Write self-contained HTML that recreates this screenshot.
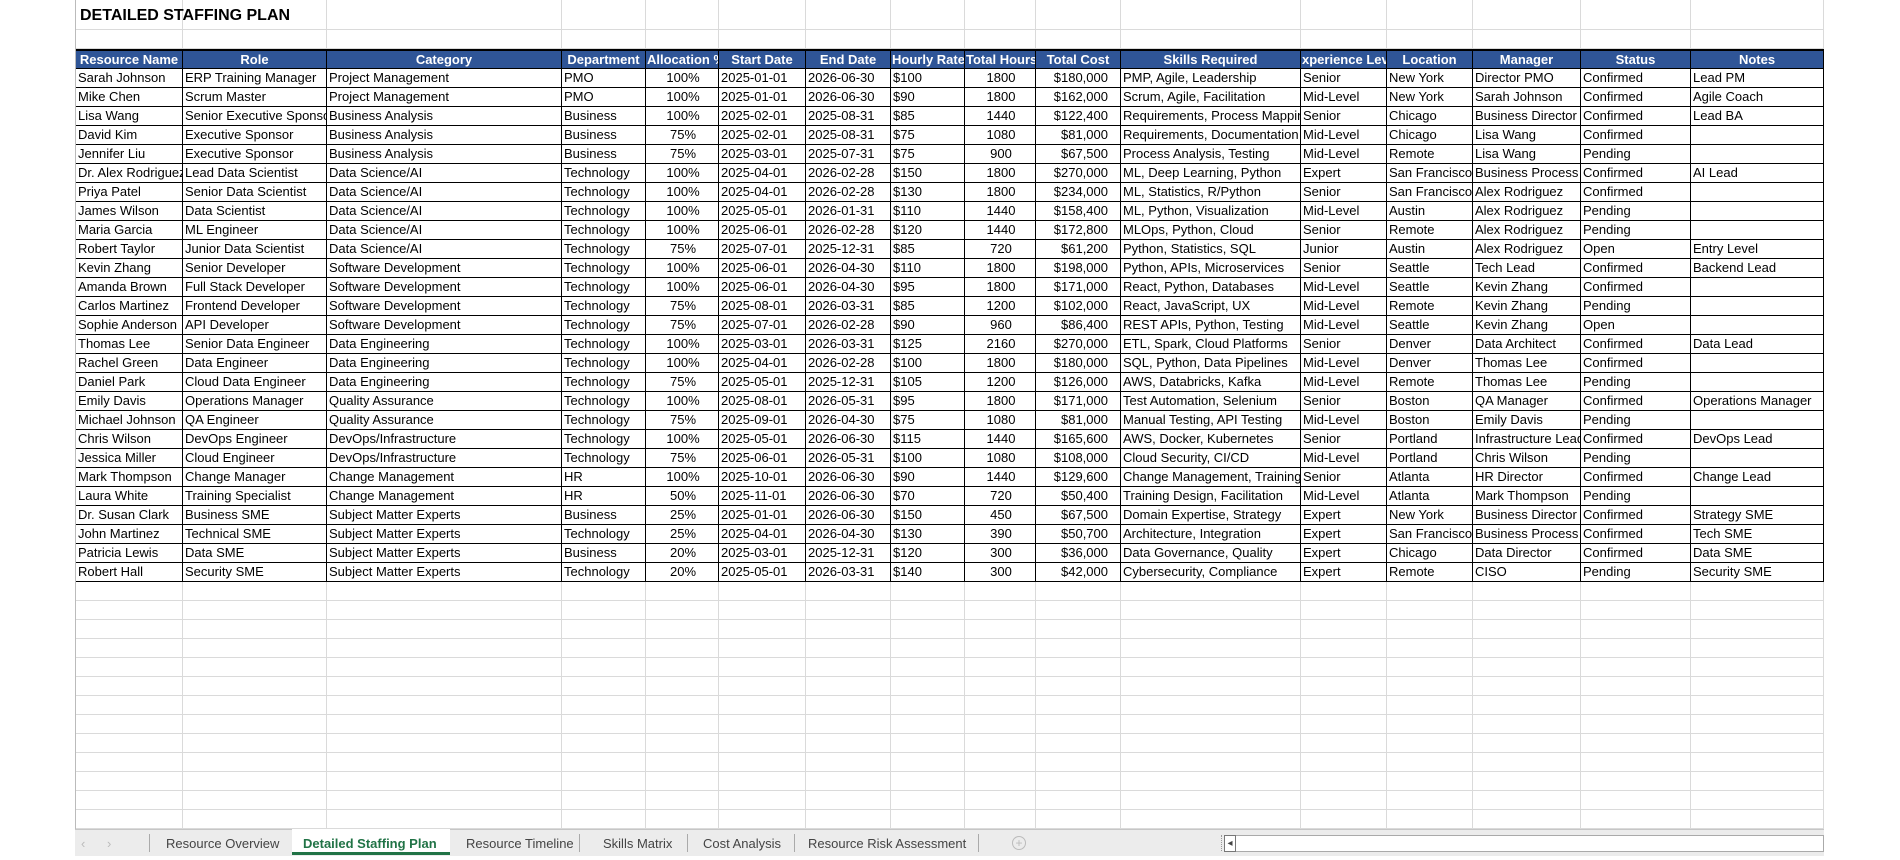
<!DOCTYPE html>
<html><head><meta charset="utf-8"><style>
*{box-sizing:border-box;margin:0;padding:0}
body{width:1900px;height:860px;background:#fff;font-family:"Liberation Sans",sans-serif;font-size:13px;color:#000;position:relative;overflow:hidden}
#sheet{position:absolute;left:75px;top:0;width:1749px}
.r{display:flex;height:19px}
.r>*{display:block;height:19px;line-height:18px;border-right:1px solid #dadada;border-bottom:1px solid #dadada;white-space:nowrap;overflow:hidden;padding-left:2px;font-style:normal;flex:none}
.r>*:nth-child(1){width:108px}.r>*:nth-child(2){width:144px}.r>*:nth-child(3){width:235px}.r>*:nth-child(4){width:84px}
.r>*:nth-child(5){width:73px;text-align:center}.r>*:nth-child(6){width:87px}.r>*:nth-child(7){width:85px}.r>*:nth-child(8){width:74px}
.r>*:nth-child(9){width:71px;text-align:center}.r>*:nth-child(10){width:85px;text-align:right;padding-right:12px}.r>*:nth-child(11){width:180px}
.r>*:nth-child(12){width:86px}.r>*:nth-child(13){width:86px}.r>*:nth-child(14){width:108px}.r>*:nth-child(15){width:110px}.r>*:nth-child(16){width:133px}
.t{height:30px}.t>*{height:30px}
.d>*{border-color:#000}
.d>*:first-child{border-left:1px solid #000}
.h>*{background:#2f5597;color:#fff;font-weight:bold;text-align:center!important;border-color:#000;border-top:2px solid #000;padding:0 1px!important;height:20px;line-height:17px}
.h>*:first-child{border-left:1px solid #000}
.h{height:20px}
#title{position:absolute;left:80px;top:7px;font-weight:bold;font-size:16px}
#tabs{position:absolute;left:75px;top:829px;width:1749px;height:27px;background:#ececec;border-top:1px solid #c6c6c6;font-size:13px;color:#444}
#tabs span{position:absolute;top:6px}
.sep{position:absolute;top:4px;width:1px;height:18px;background:#aaa}
</style></head><body>
<div id="sheet">
<div class="r t"><i></i><i></i><i></i><i></i><i></i><i></i><i></i><i></i><i></i><i></i><i></i><i></i><i></i><i></i><i></i><i></i></div>
<div class="r"><i></i><i></i><i></i><i></i><i></i><i></i><i></i><i></i><i></i><i></i><i></i><i></i><i></i><i></i><i></i><i></i></div>
<div class="r h"><i>Resource Name</i><i>Role</i><i>Category</i><i>Department</i><i>Allocation %</i><i>Start Date</i><i>End Date</i><i>Hourly Rate</i><i>Total Hours</i><i>Total Cost</i><i>Skills Required</i><i>xperience Leve</i><i>Location</i><i>Manager</i><i>Status</i><i>Notes</i></div>
<div class="r d"><i>Sarah Johnson</i><i>ERP Training Manager</i><i>Project Management</i><i>PMO</i><i>100%</i><i>2025-01-01</i><i>2026-06-30</i><i>$100</i><i>1800</i><i>$180,000</i><i>PMP, Agile, Leadership</i><i>Senior</i><i>New York</i><i>Director PMO</i><i>Confirmed</i><i>Lead PM</i></div>
<div class="r d"><i>Mike Chen</i><i>Scrum Master</i><i>Project Management</i><i>PMO</i><i>100%</i><i>2025-01-01</i><i>2026-06-30</i><i>$90</i><i>1800</i><i>$162,000</i><i>Scrum, Agile, Facilitation</i><i>Mid-Level</i><i>New York</i><i>Sarah Johnson</i><i>Confirmed</i><i>Agile Coach</i></div>
<div class="r d"><i>Lisa Wang</i><i>Senior Executive Sponsor</i><i>Business Analysis</i><i>Business</i><i>100%</i><i>2025-02-01</i><i>2025-08-31</i><i>$85</i><i>1440</i><i>$122,400</i><i>Requirements, Process Mapping</i><i>Senior</i><i>Chicago</i><i>Business Director</i><i>Confirmed</i><i>Lead BA</i></div>
<div class="r d"><i>David Kim</i><i>Executive Sponsor</i><i>Business Analysis</i><i>Business</i><i>75%</i><i>2025-02-01</i><i>2025-08-31</i><i>$75</i><i>1080</i><i>$81,000</i><i>Requirements, Documentation</i><i>Mid-Level</i><i>Chicago</i><i>Lisa Wang</i><i>Confirmed</i><i></i></div>
<div class="r d"><i>Jennifer Liu</i><i>Executive Sponsor</i><i>Business Analysis</i><i>Business</i><i>75%</i><i>2025-03-01</i><i>2025-07-31</i><i>$75</i><i>900</i><i>$67,500</i><i>Process Analysis, Testing</i><i>Mid-Level</i><i>Remote</i><i>Lisa Wang</i><i>Pending</i><i></i></div>
<div class="r d"><i>Dr. Alex Rodriguez</i><i>Lead Data Scientist</i><i>Data Science/AI</i><i>Technology</i><i>100%</i><i>2025-04-01</i><i>2026-02-28</i><i>$150</i><i>1800</i><i>$270,000</i><i>ML, Deep Learning, Python</i><i>Expert</i><i>San Francisco</i><i>Business Process</i><i>Confirmed</i><i>AI Lead</i></div>
<div class="r d"><i>Priya Patel</i><i>Senior Data Scientist</i><i>Data Science/AI</i><i>Technology</i><i>100%</i><i>2025-04-01</i><i>2026-02-28</i><i>$130</i><i>1800</i><i>$234,000</i><i>ML, Statistics, R/Python</i><i>Senior</i><i>San Francisco</i><i>Alex Rodriguez</i><i>Confirmed</i><i></i></div>
<div class="r d"><i>James Wilson</i><i>Data Scientist</i><i>Data Science/AI</i><i>Technology</i><i>100%</i><i>2025-05-01</i><i>2026-01-31</i><i>$110</i><i>1440</i><i>$158,400</i><i>ML, Python, Visualization</i><i>Mid-Level</i><i>Austin</i><i>Alex Rodriguez</i><i>Pending</i><i></i></div>
<div class="r d"><i>Maria Garcia</i><i>ML Engineer</i><i>Data Science/AI</i><i>Technology</i><i>100%</i><i>2025-06-01</i><i>2026-02-28</i><i>$120</i><i>1440</i><i>$172,800</i><i>MLOps, Python, Cloud</i><i>Senior</i><i>Remote</i><i>Alex Rodriguez</i><i>Pending</i><i></i></div>
<div class="r d"><i>Robert Taylor</i><i>Junior Data Scientist</i><i>Data Science/AI</i><i>Technology</i><i>75%</i><i>2025-07-01</i><i>2025-12-31</i><i>$85</i><i>720</i><i>$61,200</i><i>Python, Statistics, SQL</i><i>Junior</i><i>Austin</i><i>Alex Rodriguez</i><i>Open</i><i>Entry Level</i></div>
<div class="r d"><i>Kevin Zhang</i><i>Senior Developer</i><i>Software Development</i><i>Technology</i><i>100%</i><i>2025-06-01</i><i>2026-04-30</i><i>$110</i><i>1800</i><i>$198,000</i><i>Python, APIs, Microservices</i><i>Senior</i><i>Seattle</i><i>Tech Lead</i><i>Confirmed</i><i>Backend Lead</i></div>
<div class="r d"><i>Amanda Brown</i><i>Full Stack Developer</i><i>Software Development</i><i>Technology</i><i>100%</i><i>2025-06-01</i><i>2026-04-30</i><i>$95</i><i>1800</i><i>$171,000</i><i>React, Python, Databases</i><i>Mid-Level</i><i>Seattle</i><i>Kevin Zhang</i><i>Confirmed</i><i></i></div>
<div class="r d"><i>Carlos Martinez</i><i>Frontend Developer</i><i>Software Development</i><i>Technology</i><i>75%</i><i>2025-08-01</i><i>2026-03-31</i><i>$85</i><i>1200</i><i>$102,000</i><i>React, JavaScript, UX</i><i>Mid-Level</i><i>Remote</i><i>Kevin Zhang</i><i>Pending</i><i></i></div>
<div class="r d"><i>Sophie Anderson</i><i>API Developer</i><i>Software Development</i><i>Technology</i><i>75%</i><i>2025-07-01</i><i>2026-02-28</i><i>$90</i><i>960</i><i>$86,400</i><i>REST APIs, Python, Testing</i><i>Mid-Level</i><i>Seattle</i><i>Kevin Zhang</i><i>Open</i><i></i></div>
<div class="r d"><i>Thomas Lee</i><i>Senior Data Engineer</i><i>Data Engineering</i><i>Technology</i><i>100%</i><i>2025-03-01</i><i>2026-03-31</i><i>$125</i><i>2160</i><i>$270,000</i><i>ETL, Spark, Cloud Platforms</i><i>Senior</i><i>Denver</i><i>Data Architect</i><i>Confirmed</i><i>Data Lead</i></div>
<div class="r d"><i>Rachel Green</i><i>Data Engineer</i><i>Data Engineering</i><i>Technology</i><i>100%</i><i>2025-04-01</i><i>2026-02-28</i><i>$100</i><i>1800</i><i>$180,000</i><i>SQL, Python, Data Pipelines</i><i>Mid-Level</i><i>Denver</i><i>Thomas Lee</i><i>Confirmed</i><i></i></div>
<div class="r d"><i>Daniel Park</i><i>Cloud Data Engineer</i><i>Data Engineering</i><i>Technology</i><i>75%</i><i>2025-05-01</i><i>2025-12-31</i><i>$105</i><i>1200</i><i>$126,000</i><i>AWS, Databricks, Kafka</i><i>Mid-Level</i><i>Remote</i><i>Thomas Lee</i><i>Pending</i><i></i></div>
<div class="r d"><i>Emily Davis</i><i>Operations Manager</i><i>Quality Assurance</i><i>Technology</i><i>100%</i><i>2025-08-01</i><i>2026-05-31</i><i>$95</i><i>1800</i><i>$171,000</i><i>Test Automation, Selenium</i><i>Senior</i><i>Boston</i><i>QA Manager</i><i>Confirmed</i><i>Operations Manager</i></div>
<div class="r d"><i>Michael Johnson</i><i>QA Engineer</i><i>Quality Assurance</i><i>Technology</i><i>75%</i><i>2025-09-01</i><i>2026-04-30</i><i>$75</i><i>1080</i><i>$81,000</i><i>Manual Testing, API Testing</i><i>Mid-Level</i><i>Boston</i><i>Emily Davis</i><i>Pending</i><i></i></div>
<div class="r d"><i>Chris Wilson</i><i>DevOps Engineer</i><i>DevOps/Infrastructure</i><i>Technology</i><i>100%</i><i>2025-05-01</i><i>2026-06-30</i><i>$115</i><i>1440</i><i>$165,600</i><i>AWS, Docker, Kubernetes</i><i>Senior</i><i>Portland</i><i>Infrastructure Lead</i><i>Confirmed</i><i>DevOps Lead</i></div>
<div class="r d"><i>Jessica Miller</i><i>Cloud Engineer</i><i>DevOps/Infrastructure</i><i>Technology</i><i>75%</i><i>2025-06-01</i><i>2026-05-31</i><i>$100</i><i>1080</i><i>$108,000</i><i>Cloud Security, CI/CD</i><i>Mid-Level</i><i>Portland</i><i>Chris Wilson</i><i>Pending</i><i></i></div>
<div class="r d"><i>Mark Thompson</i><i>Change Manager</i><i>Change Management</i><i>HR</i><i>100%</i><i>2025-10-01</i><i>2026-06-30</i><i>$90</i><i>1440</i><i>$129,600</i><i>Change Management, Training</i><i>Senior</i><i>Atlanta</i><i>HR Director</i><i>Confirmed</i><i>Change Lead</i></div>
<div class="r d"><i>Laura White</i><i>Training Specialist</i><i>Change Management</i><i>HR</i><i>50%</i><i>2025-11-01</i><i>2026-06-30</i><i>$70</i><i>720</i><i>$50,400</i><i>Training Design, Facilitation</i><i>Mid-Level</i><i>Atlanta</i><i>Mark Thompson</i><i>Pending</i><i></i></div>
<div class="r d"><i>Dr. Susan Clark</i><i>Business SME</i><i>Subject Matter Experts</i><i>Business</i><i>25%</i><i>2025-01-01</i><i>2026-06-30</i><i>$150</i><i>450</i><i>$67,500</i><i>Domain Expertise, Strategy</i><i>Expert</i><i>New York</i><i>Business Director</i><i>Confirmed</i><i>Strategy SME</i></div>
<div class="r d"><i>John Martinez</i><i>Technical SME</i><i>Subject Matter Experts</i><i>Technology</i><i>25%</i><i>2025-04-01</i><i>2026-04-30</i><i>$130</i><i>390</i><i>$50,700</i><i>Architecture, Integration</i><i>Expert</i><i>San Francisco</i><i>Business Process</i><i>Confirmed</i><i>Tech SME</i></div>
<div class="r d"><i>Patricia Lewis</i><i>Data SME</i><i>Subject Matter Experts</i><i>Business</i><i>20%</i><i>2025-03-01</i><i>2025-12-31</i><i>$120</i><i>300</i><i>$36,000</i><i>Data Governance, Quality</i><i>Expert</i><i>Chicago</i><i>Data Director</i><i>Confirmed</i><i>Data SME</i></div>
<div class="r d"><i>Robert Hall</i><i>Security SME</i><i>Subject Matter Experts</i><i>Technology</i><i>20%</i><i>2025-05-01</i><i>2026-03-31</i><i>$140</i><i>300</i><i>$42,000</i><i>Cybersecurity, Compliance</i><i>Expert</i><i>Remote</i><i>CISO</i><i>Pending</i><i>Security SME</i></div>
<div class="r"><i></i><i></i><i></i><i></i><i></i><i></i><i></i><i></i><i></i><i></i><i></i><i></i><i></i><i></i><i></i><i></i></div>
<div class="r"><i></i><i></i><i></i><i></i><i></i><i></i><i></i><i></i><i></i><i></i><i></i><i></i><i></i><i></i><i></i><i></i></div>
<div class="r"><i></i><i></i><i></i><i></i><i></i><i></i><i></i><i></i><i></i><i></i><i></i><i></i><i></i><i></i><i></i><i></i></div>
<div class="r"><i></i><i></i><i></i><i></i><i></i><i></i><i></i><i></i><i></i><i></i><i></i><i></i><i></i><i></i><i></i><i></i></div>
<div class="r"><i></i><i></i><i></i><i></i><i></i><i></i><i></i><i></i><i></i><i></i><i></i><i></i><i></i><i></i><i></i><i></i></div>
<div class="r"><i></i><i></i><i></i><i></i><i></i><i></i><i></i><i></i><i></i><i></i><i></i><i></i><i></i><i></i><i></i><i></i></div>
<div class="r"><i></i><i></i><i></i><i></i><i></i><i></i><i></i><i></i><i></i><i></i><i></i><i></i><i></i><i></i><i></i><i></i></div>
<div class="r"><i></i><i></i><i></i><i></i><i></i><i></i><i></i><i></i><i></i><i></i><i></i><i></i><i></i><i></i><i></i><i></i></div>
<div class="r"><i></i><i></i><i></i><i></i><i></i><i></i><i></i><i></i><i></i><i></i><i></i><i></i><i></i><i></i><i></i><i></i></div>
<div class="r"><i></i><i></i><i></i><i></i><i></i><i></i><i></i><i></i><i></i><i></i><i></i><i></i><i></i><i></i><i></i><i></i></div>
<div class="r"><i></i><i></i><i></i><i></i><i></i><i></i><i></i><i></i><i></i><i></i><i></i><i></i><i></i><i></i><i></i><i></i></div>
<div class="r"><i></i><i></i><i></i><i></i><i></i><i></i><i></i><i></i><i></i><i></i><i></i><i></i><i></i><i></i><i></i><i></i></div>
<div class="r"><i></i><i></i><i></i><i></i><i></i><i></i><i></i><i></i><i></i><i></i><i></i><i></i><i></i><i></i><i></i><i></i></div>
</div>
<div style="position:absolute;left:75px;top:0;width:1px;height:829px;background:#bbb"></div>
<div id="title">DETAILED STAFFING PLAN</div>
<div id="tabs">
<span style="left:6px;color:#bbb">‹</span><span style="left:32px;color:#bbb">›</span>
<div class="sep" style="left:74px"></div>
<span style="left:91px">Resource Overview</span>
<div style="position:absolute;left:217px;top:-1px;width:158px;height:26px;background:#fff;border-bottom:3px solid #217346"></div>
<span style="left:228px;color:#217346;font-weight:bold">Detailed Staffing Plan</span>
<span style="left:391px">Resource Timeline</span>
<div class="sep" style="left:504px"></div>
<span style="left:528px">Skills Matrix</span>
<div class="sep" style="left:612px"></div>
<span style="left:628px">Cost Analysis</span>
<div class="sep" style="left:719px"></div>
<span style="left:733px">Resource Risk Assessment</span>
<div class="sep" style="left:903px"></div>
<div style="position:absolute;left:937px;top:6px;width:14px;height:14px;border:1px solid #bbb;border-radius:50%;color:#bbb;font-size:12px;line-height:12px;text-align:center">+</div>
<div style="position:absolute;left:1146px;top:5px;width:1px;height:16px;border-left:1px dotted #999"></div>
<div style="position:absolute;left:1149px;top:5px;width:600px;height:17px;background:#fff;border:1px solid #aaa"></div>
<div style="position:absolute;left:1149px;top:5px;width:12px;height:17px;border:1px solid #777;font-size:10px;line-height:15px;text-align:center">◂</div>
</div>
</body></html>
